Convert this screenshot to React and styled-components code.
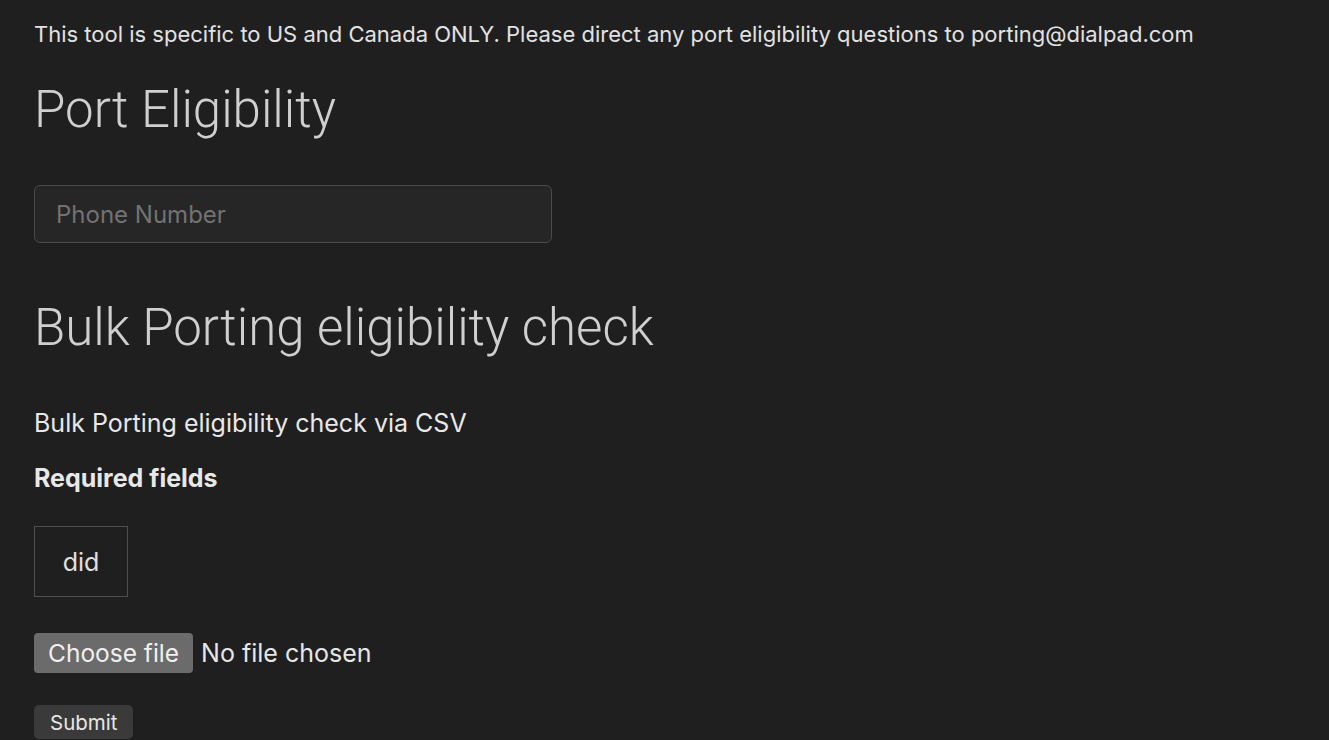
import React from "react";
import styled, { createGlobalStyle } from "styled-components";

const GlobalStyle = createGlobalStyle`
  html, body {
    margin: 0;
    padding: 0;
    background: #1f1f1f;
  }
  body {
    font-family: Inter, "Noto Sans", sans-serif;
    color: #e6e6e6;
  }
`;

const Page = styled.main`
  padding: 20px 34px 0;
  min-height: 740px;
  box-sizing: border-box;
`;

const Notice = styled.p`
  margin: 0;
  font-size: 22px;
  line-height: 28px;
  color: #e2e2e2;
`;

const Title = styled.h1`
  margin: ${(p) => p.$mt || "0"} 0 0;
  font-family: Roboto, sans-serif;
  font-weight: 300;
  font-size: 51px;
  line-height: 61px;
  color: #cfcfcf;
`;

const PhoneInput = styled.input`
  display: block;
  margin-top: 45px;
  width: 518px;
  height: 58px;
  box-sizing: border-box;
  padding: 0 21px;
  background: #262626;
  border: 1.5px solid #4a4a4a;
  border-radius: 6px;
  font-family: Inter, sans-serif;
  font-size: 24px;
  color: #e0e0e0;
  outline: none;
  &::placeholder {
    color: #727272;
  }
`;

const Text = styled.p`
  margin: ${(p) => p.$mt || "0"} 0 0;
  font-size: 25px;
  line-height: 30px;
  font-weight: ${(p) => (p.$bold ? 700 : 400)};
  color: #e8e8e8;
`;

const FieldBox = styled.div`
  margin-top: 33px;
  width: 94px;
  height: 71px;
  box-sizing: border-box;
  border: 1px solid #4e4e4e;
  display: flex;
  align-items: center;
  justify-content: center;
  font-size: 25px;
  color: #e0e0e0;
`;

const FileRow = styled.div`
  margin-top: 36px;
  display: flex;
  align-items: center;
  gap: 8px;
  font-size: 25px;
  color: #e6e6e6;
`;

const FileButton = styled.label`
  display: inline-flex;
  align-items: center;
  height: 40px;
  padding: 0 14px;
  background: #6b6b6b;
  border-radius: 4px;
  color: #f0f0f0;
  font-size: 24.5px;
  cursor: pointer;
  input {
    display: none;
  }
`;

const SubmitButton = styled.button`
  display: block;
  margin-top: 32px;
  height: 34px;
  padding: 0 16px;
  background: #3a3a3a;
  border: none;
  border-radius: 5px;
  font-family: Inter, sans-serif;
  font-size: 20.5px;
  color: #e6e6e6;
`;

export default function App() {
  return (
    <>
      <GlobalStyle />
      <Page>
        <Notice>
          This tool is specific to US and Canada ONLY. Please direct any port
          eligibility questions to porting@dialpad.com
        </Notice>
        <Title $mt="31px">Port Eligibility</Title>
        <PhoneInput placeholder="Phone Number" />
        <Title $mt="54px">Bulk Porting eligibility check</Title>
        <Text $mt="50px">Bulk Porting eligibility check via CSV</Text>
        <Text $mt="25px" $bold>
          Required fields
        </Text>
        <FieldBox>did</FieldBox>
        <FileRow>
          <FileButton>
            Choose file
            <input type="file" />
          </FileButton>
          <span>No file chosen</span>
        </FileRow>
        <SubmitButton>Submit</SubmitButton>
      </Page>
    </>
  );
}
